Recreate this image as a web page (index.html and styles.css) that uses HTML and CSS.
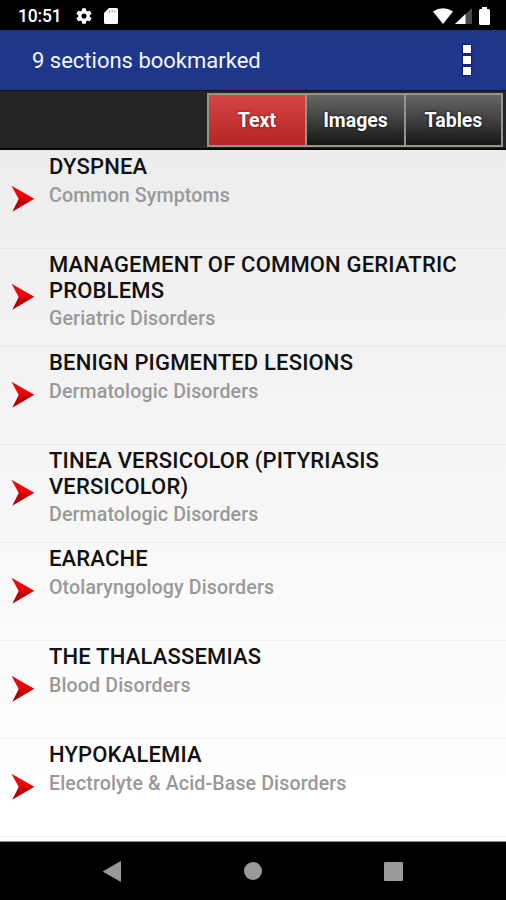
FILE: index.html
```html
<!DOCTYPE html>
<html lang="en">
<head>
<meta charset="utf-8">
<title>Bookmarks</title>
<link rel="stylesheet" href="styles.css">
</head>
<body>
<svg class="defs" aria-hidden="true">
  <defs>
    <linearGradient id="red" x1="0" y1="0" x2="0" y2="1">
      <stop offset="0" stop-color="#e50a10"/><stop offset=".45" stop-color="#f50005"/><stop offset=".62" stop-color="#b90005"/><stop offset="1" stop-color="#ae0008"/>
    </linearGradient>
    <symbol id="arrow" viewBox="0 0 24 28"><path d="M.5.8 23.3 13.8 1.3 26.8 7.700 14Z" fill="url(#red)"/></symbol>
  </defs>
</svg>
<div class="status">
  <span class="clock">10:51</span>
  <svg class="gear" viewBox="2 2 20 20"><path fill="#fff" d="M19.14 12.94c.04-.3.06-.61.06-.94 0-.32-.02-.64-.07-.94l2.03-1.58a.49.49 0 0 0 .12-.61l-1.92-3.32a.49.49 0 0 0-.59-.22l-2.39.96a7 7 0 0 0-1.62-.94l-.36-2.54a.48.48 0 0 0-.48-.41h-3.84a.48.48 0 0 0-.47.41l-.36 2.54c-.59.24-1.13.57-1.62.94l-2.39-.96a.48.48 0 0 0-.59.22L2.74 8.87a.48.48 0 0 0 .12.61l2.03 1.58c-.05.3-.09.63-.09.94s.02.64.07.94l-2.03 1.58a.49.49 0 0 0-.12.61l1.92 3.32c.12.22.37.29.59.22l2.39-.96c.5.38 1.03.7 1.62.94l.36 2.54c.05.24.24.41.48.41h3.84c.24 0 .44-.17.47-.41l.36-2.54c.59-.24 1.13-.56 1.62-.94l2.39.96c.22.08.47 0 .59-.22l1.92-3.32a.48.48 0 0 0-.12-.61ZM12 15.2a3.2 3.2 0 1 1 0-6.4 3.2 3.2 0 0 1 0 6.4Z"/></svg>
  <svg class="card" viewBox="0 0 14 16"><path fill="#fff" fill-rule="evenodd" d="M5 0h7.500Q14 0 14 1.500v13Q14 16 12.500 16h-11Q0 16 0 14.500V5Z"/><path d="M5.500 2v2.500M8.200 2v2.500M10.900 2v2.500" stroke="#999"/></svg>
  <div class="signals">
    <svg width="20" height="16" viewBox="0 0 20 16"><path fill="#fff" d="M0 3.500Q10-3 20 3.500L10 16Z"/></svg>
    <svg width="17" height="16" viewBox="0 0 17 16"><path fill="#4a4a4a" d="M17 0v16H0Z"/><path fill="#fff" d="M10.500 6v10H0Z"/></svg>
    <svg class="battery" width="11" height="18" viewBox="0 0 11 18"><path fill="#fff" d="M3 0h5v2h1.500Q11 2 11 3.500v13Q11 18 9.500 18h-8Q0 18 0 16.500v-13Q0 2 1.500 2H3Z"/></svg>
  </div>
</div>
<header class="appbar">
  <h1>9 sections bookmarked</h1>
  <div class="overflow"><i></i><i></i><i></i></div>
</header>
<nav class="tabs">
  <div class="group"><span class="tab active">Text</span><span class="tab">Images</span><span class="tab">Tables</span></div>
</nav>
<main class="list">
  <div class="row"><svg class="arrow"><use href="#arrow"/></svg><div><h2>DYSPNEA</h2><p>Common Symptoms</p></div></div>
  <div class="row"><svg class="arrow"><use href="#arrow"/></svg><div><h2>MANAGEMENT OF COMMON GERIATRIC<br>PROBLEMS</h2><p>Geriatric Disorders</p></div></div>
  <div class="row"><svg class="arrow"><use href="#arrow"/></svg><div><h2>BENIGN PIGMENTED LESIONS</h2><p>Dermatologic Disorders</p></div></div>
  <div class="row"><svg class="arrow"><use href="#arrow"/></svg><div><h2>TINEA VERSICOLOR (PITYRIASIS<br>VERSICOLOR)</h2><p>Dermatologic Disorders</p></div></div>
  <div class="row"><svg class="arrow"><use href="#arrow"/></svg><div><h2>EARACHE</h2><p>Otolaryngology Disorders</p></div></div>
  <div class="row"><svg class="arrow"><use href="#arrow"/></svg><div><h2>THE THALASSEMIAS</h2><p>Blood Disorders</p></div></div>
  <div class="row"><svg class="arrow"><use href="#arrow"/></svg><div><h2>HYPOKALEMIA</h2><p>Electrolyte &amp; Acid-Base Disorders</p></div></div>
</main>
<footer class="navbar">
  <svg width="18" height="21" viewBox="0 0 18 21"><path fill="#999" d="M18 1v19q0 1-1 .5L.5 11q-.8-.5 0-1L17 .5q1-.5 1 .5Z"/></svg>
  <svg width="18" height="18" viewBox="0 0 18 18"><circle cx="9" cy="9" r="9" fill="#999"/></svg>
  <svg width="19" height="19" viewBox="0 0 19 19"><rect width="19" height="19" rx="1" fill="#999"/></svg>
</footer>
</body>
</html>
```
FILE: styles.css
```css
* { box-sizing: border-box; }
body { margin: 0; width: 506px; height: 900px; overflow: hidden; display: flex; flex-direction: column; background: #000; font-family: Roboto, "Liberation Sans", sans-serif; }
svg { display: block; flex: none; }
h1, h2, p { margin: 0; white-space: nowrap; }
.defs { position: absolute; width: 0; height: 0; }

.status { height: 30px; flex: none; display: flex; align-items: center; padding: 1px 16px 0 18px; background: #000; }
.clock { width: 58px; color: #fff; font-size: 17.5px; font-weight: 500; line-height: 30px; letter-spacing: -.2px; }
.gear { width: 16px; height: 16px; }
.card { width: 14px; height: 16px; margin-left: 12px; }
.signals { display: flex; align-items: center; margin-left: auto; }
.signals svg + svg { margin-left: 2px; }
.signals .battery { margin-left: 7px; }

.appbar { height: 60px; flex: none; display: flex; align-items: center; justify-content: space-between; padding: 0 34px 0 32px; background: #1f378a; }
h1 { padding-top: 2px; color: #f4f6ff; font-size: 22px; font-weight: 400; line-height: 30px; }
.overflow { display: grid; gap: 3px; padding: 0 1px; }
.overflow i { width: 8px; height: 8px; background: #fff; box-shadow: 0 0 1px 1px #101d80; }

.tabs { height: 60px; flex: none; display: flex; justify-content: flex-end; padding: 2px 3px; background: #242424; border-top: 1px solid #111; border-bottom: 2px solid #080808; }
.group { display: grid; grid-template-columns: 96px 97px 95px; gap: 2px; width: 296px; height: 54px; padding: 2px; background: #96938a; }
.tab { display: flex; align-items: center; justify-content: center; padding-top: 1px; background: linear-gradient(#666, #383838 60%, #151515); color: #fff; font-size: 19.5px; font-weight: 700; text-shadow: 0 0 3px #000; }
.tab.active { background: linear-gradient(#d64646, #b52525); text-shadow: 0 0 3px #7a1010; }

.list { height: 692px; flex: none; padding-top: 1px; background: linear-gradient(#ededed, #fff 94%); border-bottom: 1px solid #888; }
.row { height: 98px; display: flex; align-items: center; padding: 0 0 1px 11px; border-bottom: 1px solid rgba(0, 0, 0, .045); }
.row > div { align-self: flex-start; margin-left: 14px; padding-top: 3px; }
.arrow { width: 24px; height: 28px; }
h2 { color: #111; font-size: 22px; font-weight: 500; line-height: 25.5px; letter-spacing: .17px; }
p { margin-top: 3px; color: #999; font-size: 19.6px; font-weight: 500; line-height: 25px; letter-spacing: .12px; }

.navbar { flex: 1; display: flex; align-items: center; justify-content: space-between; padding: 0 103px; }
```
